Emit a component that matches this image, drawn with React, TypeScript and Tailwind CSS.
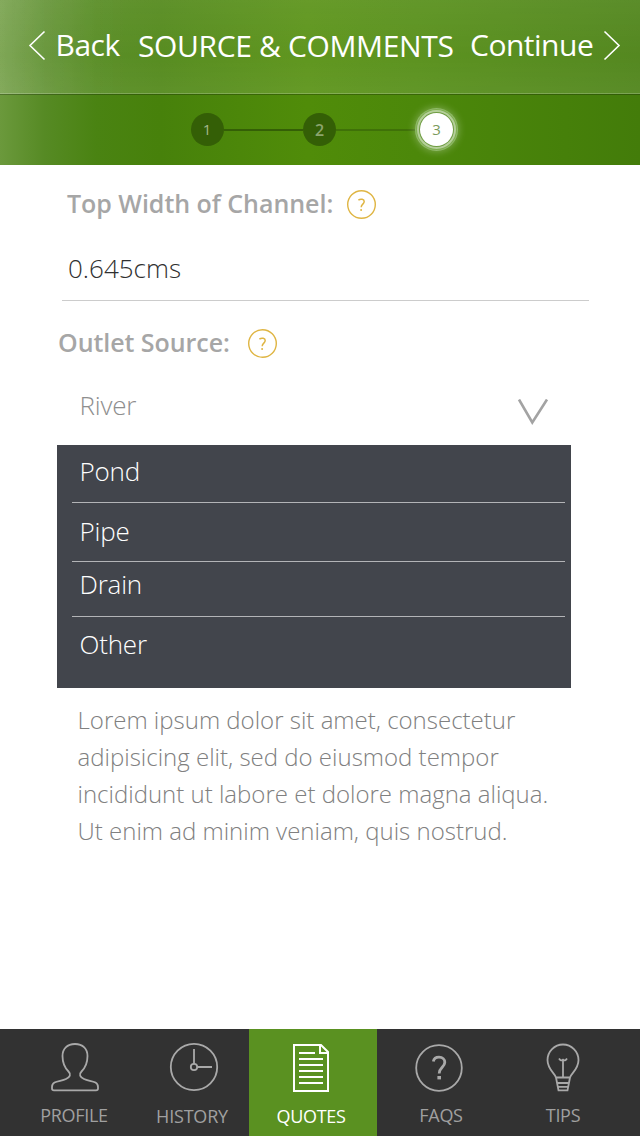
import type { ReactNode } from "react";

function Help() {
  return (
    <svg width="30" height="30" viewBox="0 0 30 30" fill="none" className="shrink-0">
      <circle cx="15.5" cy="15.5" r="13.8" stroke="#dfb543" strokeWidth="1.4" />
      <path d="M12.4 11.1C14.8 9.4 18.2 10.2 18.2 12.6C18.2 15 15.2 15.3 15.2 18.2" stroke="#dfb543" strokeWidth="1.5" />
      <circle cx="15.1" cy="20.9" r="1" fill="#dfb543" />
    </svg>
  );
}

function Tab({ label, className, children }: { label: string; className: string; children: ReactNode }) {
  return (
    <div className={`flex flex-col items-center text-lg leading-6 whitespace-nowrap ${className}`}>
      {children}
      <span>{label}</span>
    </div>
  );
}

const options = [
  { name: "Pond", row: "h-[57px] pb-[5px]" },
  { name: "Pipe", row: "h-[59px] pb-[2px] border-t" },
  { name: "Drain", row: "h-[55px] pb-[10px] border-t" },
  { name: "Other", row: "h-[72px] pb-[17px] border-t" },
];

export default function App() {
  return (
    <div className="flex h-[1136px] w-[640px] flex-col overflow-hidden bg-white font-['Open_Sans',sans-serif]">
      <header className="bg-[linear-gradient(90deg,#6b993c,#568a24_7%,#4a8312_15%,#47810b_25%,#508c09_48%,#4c880a_65%,#437c0a)]">
        <div className="flex h-[94px] items-center border-b border-white/20 bg-[linear-gradient(90deg,rgba(255,255,255,0.05),transparent_20%),linear-gradient(180deg,rgba(255,255,255,0.13),rgba(255,255,255,0.09)_60%,rgba(255,255,255,0.12))] pb-[1px] text-[30px] leading-none whitespace-nowrap text-white">
          <svg width="18" height="32" viewBox="0 0 18 32" fill="none" stroke="white" strokeWidth="1.6" className="ml-7">
            <path d="M16.5 1.5L2 15.5L16.5 29.5" />
          </svg>
          <span className="ml-[9.5px] w-[82.5px] pb-[2px] tracking-[-0.5px]">Back</span>
          <span className="w-[332px] tracking-[-0.36px]">SOURCE &amp; COMMENTS</span>
          <span className="w-[133px] pb-[2px] tracking-[-0.5px]">Continue</span>
          <svg width="18" height="32" viewBox="0 0 18 32" fill="none" stroke="white" strokeWidth="1.6">
            <path d="M1.5 1.5L16 15.5L1.5 29.5" />
          </svg>
        </div>
        <div className="flex h-[71px] items-center border-t border-black/25 pb-[1px] pl-[191px] text-[15px]">
          <div className="flex size-[33px] items-center justify-center rounded-full bg-[#345f06] pr-px text-[#a4b78d]">1</div>
          <div className="h-[2px] w-[79px] bg-[#345f06]" />
          <div className="flex size-[33px] items-center justify-center rounded-full bg-[#345f06] text-base font-semibold text-[#8ca46d]">2</div>
          <div className="h-[2px] w-[84px] bg-[#3f7108]" />
          <div className="flex size-[33px] items-center justify-center rounded-full bg-white text-[#7b9a5c] shadow-[0_0_0_1px_#6f9d42,0_0_0_3px_#b5cf9a,0_0_0_4px_#7fae50,0_0_0_5px_#8fb968,0_0_9px_5px_rgba(255,255,255,0.35)]">3</div>
        </div>
      </header>

      <main className="flex h-[864px] flex-col">
        <div className="mt-6 flex h-[30px] items-center pl-[67px]">
          <span className="w-[279px] pb-[2px] text-[25px] leading-[28px] font-semibold tracking-[-0.03px] whitespace-nowrap text-[#a6a6a6]">Top Width of Channel:</span>
          <Help />
        </div>
        <div className="ml-[62px] h-[82px] w-[527px] border-b border-[#cccccc] pt-[34px] pl-[6px] text-[26px] leading-[30px] font-light text-[#303030]">0.645cms</div>
        <div className="mt-[27px] flex h-[30px] items-center pl-[58px]">
          <span className="w-[189px] pb-[2px] text-[25px] leading-[28px] font-semibold tracking-[-0.05px] whitespace-nowrap text-[#a6a6a6]">Outlet Source:</span>
          <Help />
        </div>
        <div className="flex h-[87px] items-start justify-between pt-[32px] pr-[91px] pl-[79.5px]">
          <span className="text-[26px] leading-[30px] font-light tracking-[-0.2px] text-[#8e8e8e]">River</span>
          <svg width="32" height="26" viewBox="0 0 32 26" fill="none" stroke="#a3a3a3" strokeWidth="2.6" className="mt-[9px]">
            <path d="M2 0.5L15.3 23.5L30 0.5" />
          </svg>
        </div>
        <div className="ml-[57px] h-[243px] w-[514px] bg-[#42454c] pr-[6px] pl-[15px] text-[26px] font-light tracking-[-0.2px] text-white">
          {options.map((o) => (
            <div key={o.name} className={`flex items-center border-[#b3b4b7] pl-[7.5px] leading-[30px] ${o.row}`}>{o.name}</div>
          ))}
        </div>
        <p className="mt-[13px] ml-[77.5px] text-2xl leading-[37px] font-light whitespace-nowrap text-[#808080]">
          Lorem ipsum dolor sit amet, consectetur<br />
          adipisicing elit, sed do eiusmod tempor<br />
          incididunt ut labore et dolore magna aliqua.<br />
          Ut enim ad minim veniam, quis nostrud.
        </p>
      </main>

      <nav className="flex h-[107px] bg-[#323232] text-[#a0a0a0]">
        <Tab label="PROFILE" className="w-[148px] pt-[13px] tracking-[-0.3px]">
          <svg width="50" height="50" viewBox="0 0 50 50" fill="none" stroke="#a9a9a9" strokeWidth="1.8" className="mb-[11px] ml-[2px] shrink-0">
            <path d="M25 2C17 2 12.5 7 12.5 14C12.5 21 15 26 18.5 29.5C21.5 32.5 20 35 16 37C10.5 39.7 2 38.5 2 45V46.5Q2 48.4 4 48.4H46Q48 48.4 48 46.5V45C48 38.5 39.5 39.7 34 37C30 35 28.5 32.5 31.5 29.5C35 26 37.5 21 37.5 14C37.5 7 33 2 25 2Z" />
          </svg>
        </Tab>
        <Tab label="HISTORY" className="w-[88px] pt-[13px] tracking-[-0.2px]">
          <svg width="50" height="50" viewBox="0 0 50 50" fill="none" stroke="#a9a9a9" strokeWidth="1.8" className="mb-3 ml-[4px] shrink-0">
            <circle cx="25" cy="25" r="23.2" />
            <circle cx="25" cy="25" r="3.2" />
            <path d="M25 7V22M28 25H43" />
          </svg>
        </Tab>
        <Tab label="QUOTES" className="ml-[13px] w-[128px] bg-[#5a9121] pt-[14px] pr-1 tracking-[-0.3px] text-white">
          <svg width="38" height="50" viewBox="0 0 38 50" fill="none" stroke="white" strokeWidth="2" className="mb-[11px] shrink-0">
            <path d="M2 2H29L36 9V48H2ZM28 2V10H36M7 10H23M7 16H31M7 22H31M7 28H31M7 34H31M7 40H31" />
          </svg>
        </Tab>
        <Tab label="FAQS" className="w-[128px] pt-[14px] tracking-[-0.3px]">
          <svg width="50" height="50" viewBox="0 0 50 50" fill="none" stroke="#a9a9a9" strokeWidth="1.8" className="mr-[4px] mb-[10px] shrink-0">
            <circle cx="25" cy="25" r="22.8" />
            <path d="M19.3 18.5C20 15.4 22 14.2 25 14.2C28.7 14.2 30.8 16.4 30.8 19.3C30.8 24.3 25.2 24.5 25.2 30.5" strokeWidth="2.8" />
            <path d="M23.4 33h3.6v3.4h-3.6z" fill="#a9a9a9" stroke="none" />
          </svg>
        </Tab>
        <Tab label="TIPS" className="w-[116px] pt-[14px] tracking-[-0.3px]">
          <svg width="36" height="50" viewBox="0 0 36 50" fill="none" stroke="#a9a9a9" strokeWidth="1.8" className="mb-[10px] shrink-0">
            <path d="M13.5 47.3L11 34.5C10.3 30.8 2.5 26.5 2.5 17A15.5 15.5 0 0 1 33.5 17C33.5 26.5 25.7 30.8 25 34.5L22.5 47.3ZM11 34.5H25M12 40H24M12.6 43.8H23.4M18 34.5V18M14 15.5Q16 18.5 18 16.8Q20 18.5 22 15.5" />
          </svg>
        </Tab>
      </nav>
    </div>
  );
}
